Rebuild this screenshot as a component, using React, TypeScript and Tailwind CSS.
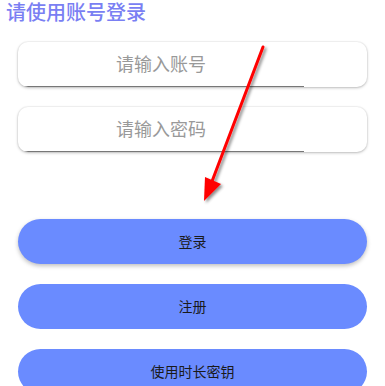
export default function App() {
  const fields = ["请输入账号", "请输入密码"];
  const buttons = ["登录", "注册", "使用时长密钥"];

  return (
    <div
      className="relative w-[385px] h-[386px] overflow-hidden bg-white"
      style={{ fontFamily: '"Noto Sans", "Noto Sans CJK SC", sans-serif' }}
    >
      <h1 className="pl-[6px] text-[20px] leading-[26px] font-medium text-[#7a7ff3]">请使用账号登录</h1>

      <div className="mt-[16px] flex flex-col gap-[20px] px-[18px]">
        {fields.map((f) => (
          <div
            key={f}
            className="h-[45px] rounded-[10px] bg-white shadow-[0_1px_3px_rgba(0,0,0,0.25),0_0_0_1px_rgba(0,0,0,0.03)] overflow-hidden"
          >
            <input
              type={f === "请输入密码" ? "password" : "text"}
              placeholder={f}
              className="w-[286px] h-[45px] border-b border-[#777] bg-transparent text-center text-[18px] text-[#333] placeholder:text-[#999] outline-none"
            />
          </div>
        ))}
      </div>

      <div className="mt-[67px] flex flex-col gap-[20px] px-[18px]">
        {buttons.map((b, i) => (
          <button
            key={b}
            className={
              "h-[45px] w-full rounded-full bg-[#6a8bff] text-[14px] text-[#1a1a1a] " +
              (i === 0 ? "shadow-[0_2px_4px_rgba(0,0,0,0.25)]" : "")
            }
          >
            {b}
          </button>
        ))}
      </div>

      {/* red annotation arrow */}
      <svg className="absolute left-0 top-0 pointer-events-none" width="385" height="386">
        <defs>
          <filter id="sh" x="-50%" y="-50%" width="200%" height="200%">
            <feDropShadow dx="2" dy="2" stdDeviation="1.5" floodColor="#000" floodOpacity="0.45" />
          </filter>
        </defs>
        <g filter="url(#sh)">
          <line x1="263" y1="47" x2="211" y2="184" stroke="#ff0000" strokeWidth="3" strokeLinecap="round" />
          <polygon points="204,201 205,177 221,184" fill="#ff0000" />
        </g>
      </svg>
    </div>
  );
}
